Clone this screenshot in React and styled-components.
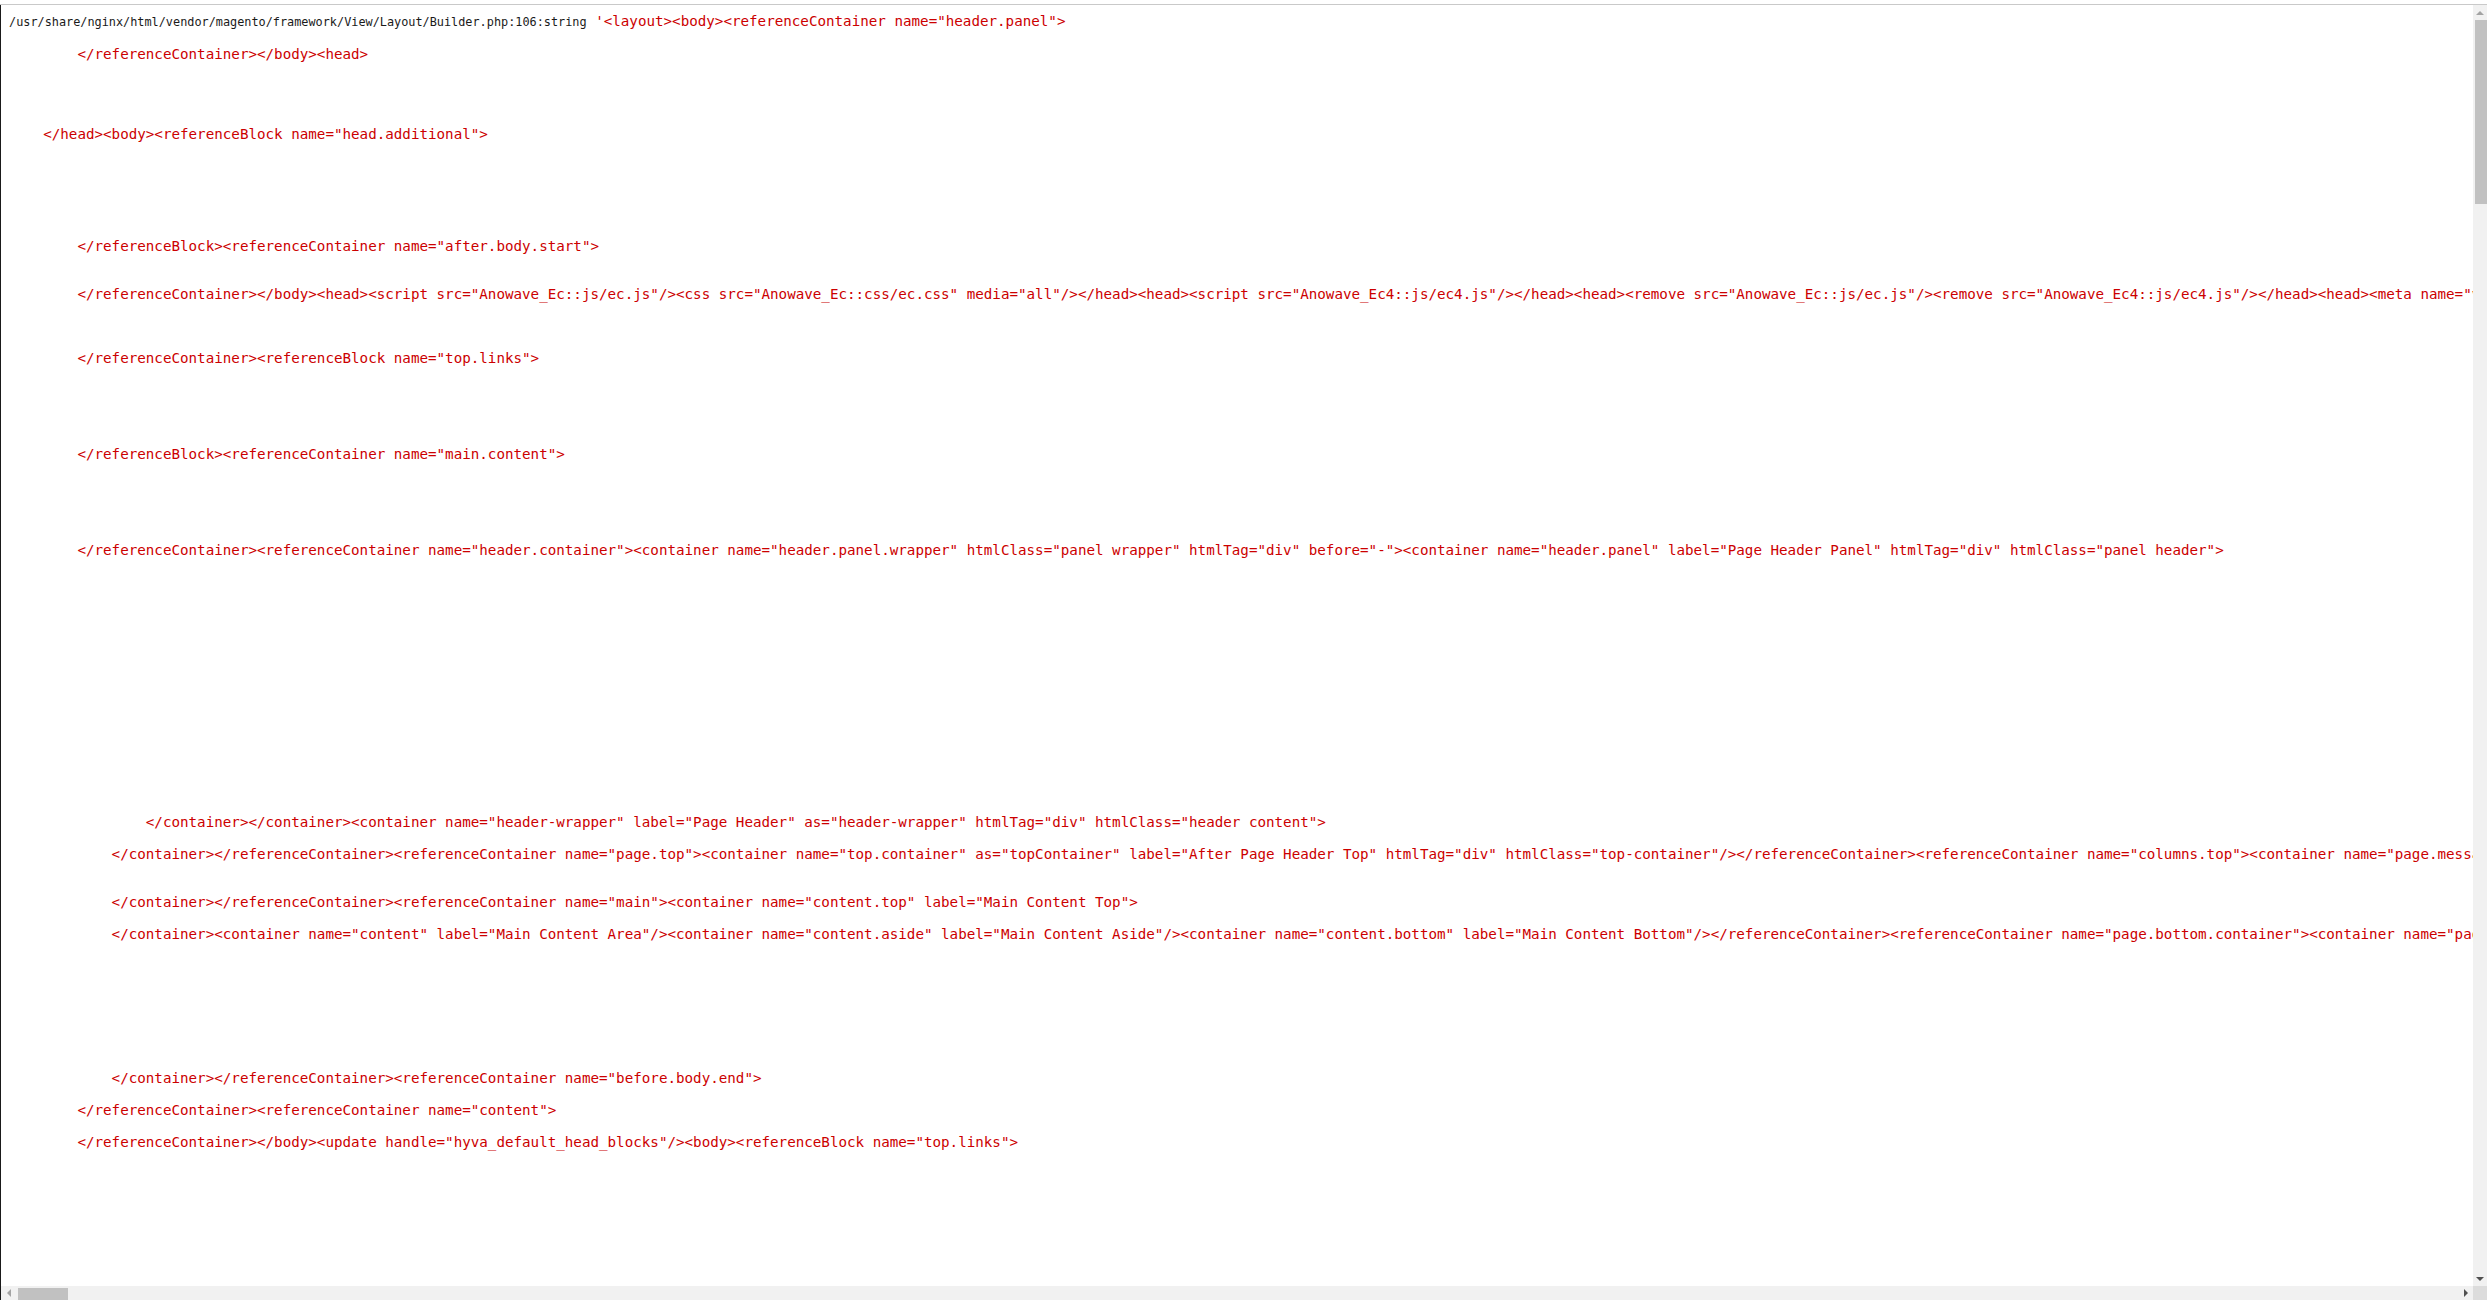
import React from "react";
import styled, { createGlobalStyle } from "styled-components";

const GlobalStyle = createGlobalStyle`
  html, body {
    margin: 0;
    padding: 0;
    background: #ffffff;
    overflow: hidden;
  }
`;

const Frame = styled.div`
  height: 100vh;
  display: grid;
  grid-template-rows: 4px 1px 1fr;
  background: #ffffff;
`;

const TopGap = styled.div`
  background: #ffffff;
`;

const Rule = styled.div`
  background: #c9c9c9;
`;

const Viewport = styled.div`
  min-height: 0;
  display: grid;
  grid-template-columns: 1fr 14px;
  grid-template-rows: 1fr 14px;
  border-left: 1px solid #1a1a1a;
`;

const Content = styled.div`
  min-width: 0;
  min-height: 0;
  overflow: hidden;
  padding: 8px 0 0 8px;
`;

const Dump = styled.pre`
  margin: 0;
  font-family: "DejaVu Sans Mono", monospace;
  font-size: 14.21px;
  line-height: 16px;
  white-space: pre;
`;

const Path = styled.small`
  font-size: 11.85px;
  color: #1a1a1a;
`;

const Str = styled.span`
  color: #cc0000;
`;

const VTrack = styled.div`
  background: #f1f1f1;
  display: flex;
  flex-direction: column;
  align-items: flex-end;
`;

const HTrack = styled.div`
  background: #f1f1f1;
  display: flex;
  flex-direction: row;
  align-items: flex-end;
`;

const Corner = styled.div`
  background: #dcdcdc;
`;

const ArrowBox = styled.div`
  flex: none;
  width: ${(p) => (p.$horizontal ? "15px" : "14px")};
  height: ${(p) => (p.$horizontal ? "14px" : "15px")};
  align-self: stretch;
  display: flex;
  align-items: center;
  justify-content: center;
`;

const Tri = styled.div`
  width: 0;
  height: 0;
  ${(p) =>
    p.$dir === "up"
      ? `border-left: 4px solid transparent; border-right: 4px solid transparent; border-bottom: 4px solid ${p.$color};`
      : p.$dir === "down"
      ? `border-left: 4px solid transparent; border-right: 4px solid transparent; border-top: 4px solid ${p.$color};`
      : p.$dir === "left"
      ? `border-top: 4px solid transparent; border-bottom: 4px solid transparent; border-right: 4px solid ${p.$color};`
      : `border-top: 4px solid transparent; border-bottom: 4px solid transparent; border-left: 4px solid ${p.$color};`}
`;

const VThumb = styled.div`
  flex: none;
  width: 12px;
  height: 184px;
  background: #c1c1c1;
`;

const HThumb = styled.div`
  flex: none;
  width: 50px;
  height: 12px;
  margin-left: 2px;
  background: #c1c1c1;
`;

const Spacer = styled.div`
  flex: 1;
`;

const PATH =
  "/usr/share/nginx/html/vendor/magento/framework/View/Layout/Builder.php:106:string";

const LINES = {
  0: `'<layout><body><referenceContainer name="header.panel">`,
  2: `        </referenceContainer></body><head>`,
  7: `    </head><body><referenceBlock name="head.additional">`,
  14: `        </referenceBlock><referenceContainer name="after.body.start">`,
  17: `        </referenceContainer></body><head><script src="Anowave_Ec::js/ec.js"/><css src="Anowave_Ec::css/ec.css" media="all"/></head><head><script src="Anowave_Ec4::js/ec4.js"/></head><head><remove src="Anowave_Ec::js/ec.js"/><remove src="Anowave_Ec4::js/ec4.js"/></head><head><meta name="viewport" content="width=device-width, initial-scale=1"/></head>`,
  21: `        </referenceContainer><referenceBlock name="top.links">`,
  27: `        </referenceBlock><referenceContainer name="main.content">`,
  33: `        </referenceContainer><referenceContainer name="header.container"><container name="header.panel.wrapper" htmlClass="panel wrapper" htmlTag="div" before="-"><container name="header.panel" label="Page Header Panel" htmlTag="div" htmlClass="panel header">`,
  50: `                </container></container><container name="header-wrapper" label="Page Header" as="header-wrapper" htmlTag="div" htmlClass="header content">`,
  52: `            </container></referenceContainer><referenceContainer name="page.top"><container name="top.container" as="topContainer" label="After Page Header Top" htmlTag="div" htmlClass="top-container"/></referenceContainer><referenceContainer name="columns.top"><container name="page.messages" htmlTag="div" htmlClass="page messages"/>`,
  55: `            </container></referenceContainer><referenceContainer name="main"><container name="content.top" label="Main Content Top">`,
  57: `            </container><container name="content" label="Main Content Area"/><container name="content.aside" label="Main Content Aside"/><container name="content.bottom" label="Main Content Bottom"/></referenceContainer><referenceContainer name="page.bottom.container"><container name="page.bottom" label="Before Page Footer" htmlTag="div" htmlClass="page-bottom"/>`,
  66: `            </container></referenceContainer><referenceContainer name="before.body.end">`,
  68: `        </referenceContainer><referenceContainer name="content">`,
  70: `        </referenceContainer></body><update handle="hyva_default_head_blocks"/><body><referenceBlock name="top.links">`,
};

const buildText = () => {
  const out = [];
  for (let i = 0; i <= 70; i++) out.push(LINES[i] || "");
  return out.join("\n");
};

export default function App() {
  const text = buildText();
  return (
    <>
      <GlobalStyle />
      <Frame>
        <TopGap />
        <Rule />
        <Viewport>
          <Content>
            <Dump>
              <Path>{PATH}</Path> <Str>{text}</Str>
            </Dump>
          </Content>
          <VTrack>
            <ArrowBox>
              <Tri $dir="up" $color="#a3a3a3" />
            </ArrowBox>
            <VThumb />
            <Spacer />
            <ArrowBox>
              <Tri $dir="down" $color="#505050" />
            </ArrowBox>
          </VTrack>
          <HTrack>
            <ArrowBox $horizontal>
              <Tri $dir="left" $color="#a3a3a3" />
            </ArrowBox>
            <HThumb />
            <Spacer />
            <ArrowBox $horizontal>
              <Tri $dir="right" $color="#505050" />
            </ArrowBox>
          </HTrack>
          <Corner />
        </Viewport>
      </Frame>
    </>
  );
}
